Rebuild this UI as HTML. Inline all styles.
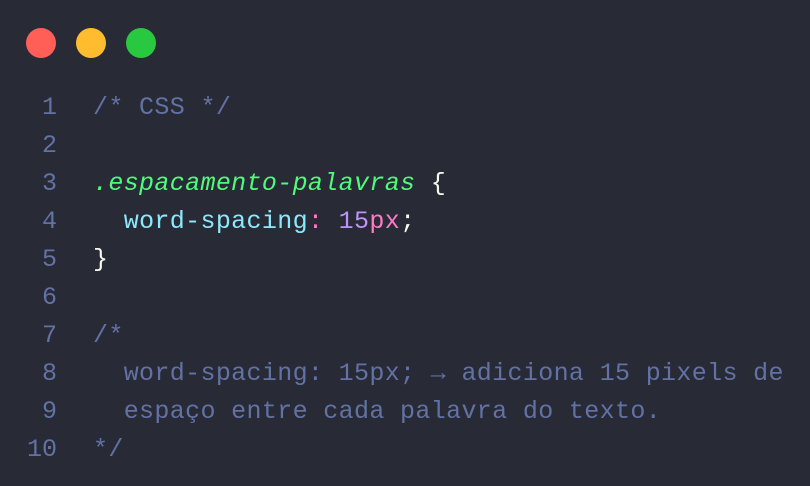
<!DOCTYPE html>
<html><head><style>
body{margin:0;width:810px;height:486px;background:#282a36;overflow:hidden;font-family:"Liberation Mono",monospace;}
.d{position:absolute;top:28px;width:30px;height:30px;border-radius:50%}
.code{position:absolute;top:89px;left:0;font-size:25px;line-height:38px;}
.ln{position:absolute;left:0;width:57px;text-align:right;color:#6272a4;white-space:pre}
.c{position:absolute;left:93px;color:#f8f8f2;white-space:pre;letter-spacing:0.35px}
.cm{color:#6272a4}.g{color:#50fa7b;font-style:italic}.cy{color:#8be9fd}.p{color:#bd93f9}.pk{color:#ff79c6}
</style></head><body>
<div class="d" style="left:26px;background:#ff5f57"></div>
<div class="d" style="left:76px;background:#febc2e"></div>
<div class="d" style="left:126px;background:#28c840"></div>
<div class="code"><div class="ln">1
2
3
4
5
6
7
8
9
10</div><div class="c"><span class="cm">/* CSS */</span>

<span class="g">.espacamento-palavras</span> {
  <span class="cy">word-spacing</span><span class="pk">:</span> <span class="p">15</span><span class="pk">px</span>;
}

<span class="cm">/*
  word-spacing: 15px; → adiciona 15 pixels de
  espaço entre cada palavra do texto.
*/</span></div></div>
</body></html>
